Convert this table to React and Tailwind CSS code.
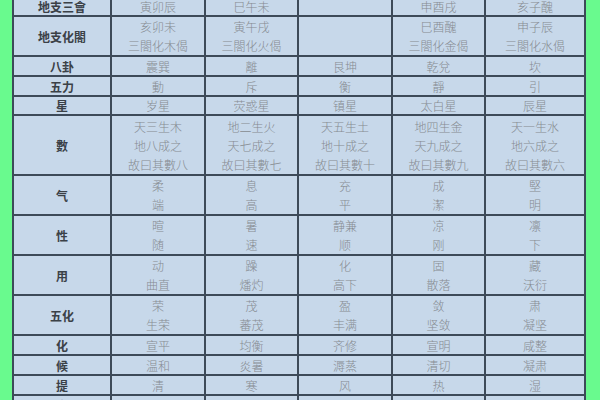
import { Fragment } from 'react'

const ROWS = [
  { label: '地支三會', cells: [['寅卯辰'], ['巳午未'], [], ['申酉戌'], ['亥子醜']] },
  { label: '地支化閤', cells: [['亥卯未', '三閤化木偈'], ['寅午戌', '三閤化火偈'], [], ['巳酉醜', '三閤化金偈'], ['申子辰', '三閤化水偈']] },
  { label: '八卦', cells: [['震巽'], ['離'], ['艮坤'], ['乾兌'], ['坎']] },
  { label: '五力', cells: [['動'], ['斥'], ['衡'], ['靜'], ['引']] },
  { label: '星', cells: [['岁星'], ['荧惑星'], ['镇星'], ['太白星'], ['辰星']] },
  {
    label: '數', cells: [
      ['天三生木', '地八成之', '故曰其數八'],
      ['地二生火', '天七成之', '故曰其數七'],
      ['天五生土', '地十成之', '故曰其數十'],
      ['地四生金', '天九成之', '故曰其數九'],
      ['天一生水', '地六成之', '故曰其數六'],
    ],
  },
  { label: '气', cells: [['柔', '端'], ['息', '高'], ['充', '平'], ['成', '潔'], ['堅', '明']] },
  { label: '性', cells: [['暄', '随'], ['暑', '速'], ['静兼', '顺'], ['凉', '刚'], ['凛', '下']] },
  { label: '用', cells: [['动', '曲直'], ['躁', '燔灼'], ['化', '高下'], ['固', '散落'], ['藏', '沃衍']] },
  { label: '五化', cells: [['荣', '生荣'], ['茂', '蕃茂'], ['盈', '丰满'], ['敛', '坚敛'], ['肃', '凝坚']] },
  { label: '化', cells: [['宣平'], ['均衡'], ['齐修'], ['宣明'], ['咸整']] },
  { label: '候', cells: [['温和'], ['炎暑'], ['溽蒸'], ['清切'], ['凝肃']] },
  { label: '提', cells: [['清'], ['寒'], ['风'], ['热'], ['湿']] },
  { label: '变', cells: [['振发'], ['销烁'], ['动注'], ['肃杀'], ['凝冽']] },
]

export default function App() {
  return (
    <div className="w-[600px] h-[400px] overflow-hidden bg-[#69fa8e] pl-[12px]" style={{ fontFamily: '"Noto Sans CJK SC", "Noto Sans CJK TC", sans-serif' }}>
      <div className="-mt-[5px] w-[574px] grid grid-cols-[96px_92px_91px_92px_91px_98px] grid-rows-[18px_38px_18px_18px_17px_58px_38px_38px_38px_38px_18px_18px_18px_18px] gap-[2px] p-[2px] bg-[#3d4a59]">
        {ROWS.map(row => (
          <Fragment key={row.label}>
            <div className="bg-[#c7d8ea] flex items-center justify-center text-[12px] leading-[17px] font-bold text-[#3b4147]">
              {row.label}
            </div>
            {row.cells.map((lines, i) => (
              <div key={i} className="bg-[#c7d8ea] flex flex-col items-center justify-center text-[12px] leading-[19px] font-light text-[#868b91]">
                {lines.map(t => <div key={t}>{t}</div>)}
              </div>
            ))}
          </Fragment>
        ))}
      </div>
    </div>
  )
}
